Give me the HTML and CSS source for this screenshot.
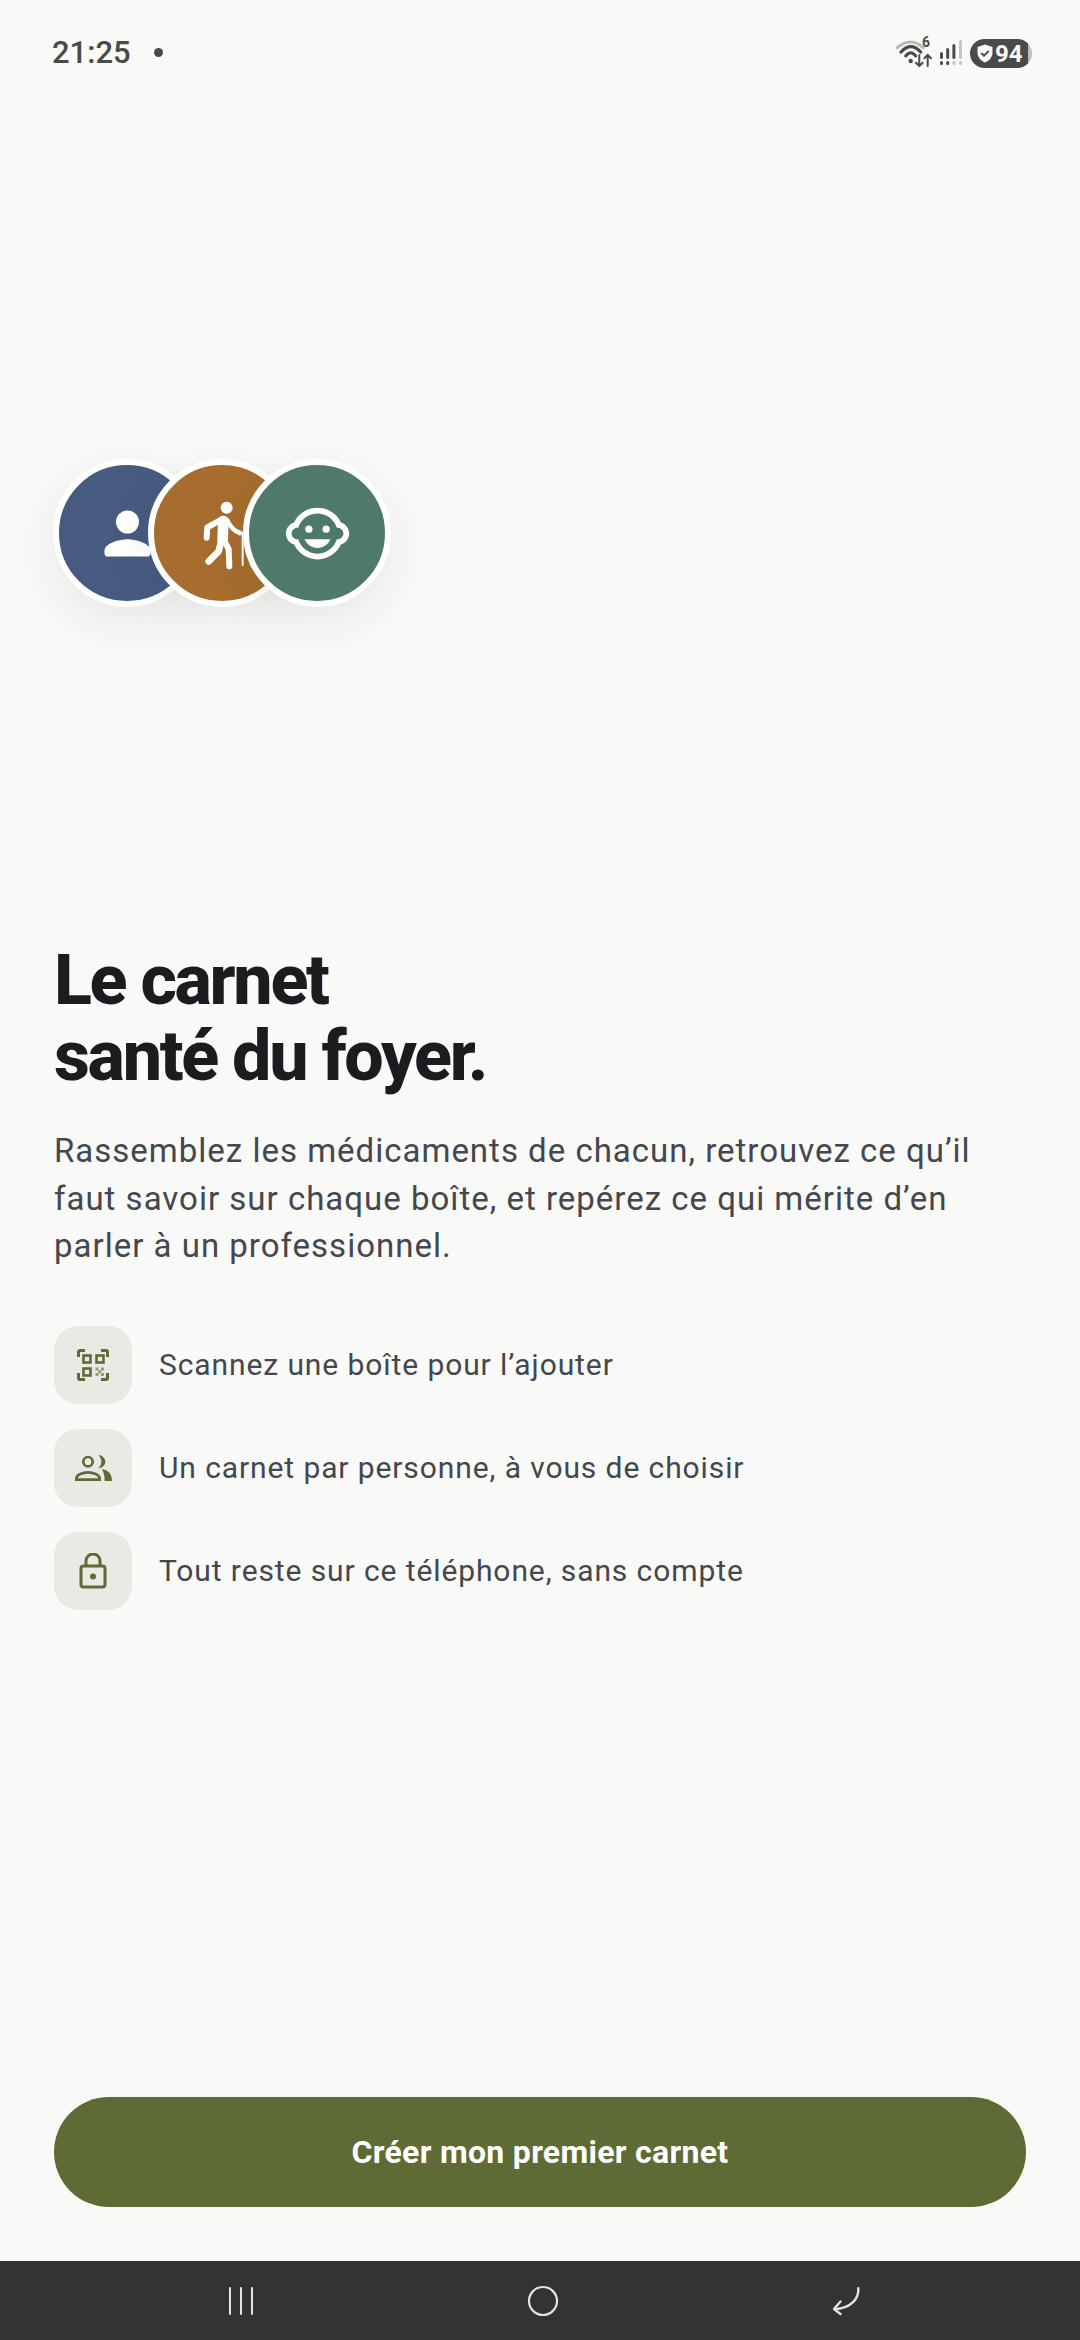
FILE: index.html
```html
<!DOCTYPE html>
<html lang="fr">
<head>
  <meta charset="UTF-8" />
  <meta name="viewport" content="width=device-width, initial-scale=1.0" />
  <title>Le carnet santé du foyer</title>
  <link rel="stylesheet" href="styles.css">
</head>
<body>
  <div class="status-bar">
    <div class="status-left">
      <span class="time">21:25</span>
      <span class="status-dot"></span>
    </div>
    <div class="status-right">
      <svg class="wifi" width="39" height="28" viewBox="0 0 39 28" fill="none" stroke="#4a4a4a" stroke-linecap="round">
        <path d="M2.300 8.700Q15.500 -2.700 28.300 8.700" stroke="#b8b8b6" stroke-width="3"/>
        <path d="M6 13Q15.700 2.400 25.700 13" stroke-width="3.200"/>
        <path d="M10.700 17Q15.700 10.400 20.700 17" stroke-width="3"/>
        <circle cx="15.700" cy="22" r="2.200" fill="#4a4a4a" stroke="none"/>
        <path d="M24.300 16v11M21 23.700l3.300 3.300 3.400-3.300" stroke-width="2"/>
        <path d="M32.700 16v11M29.300 19.300l3.400-3.300 3.300 3.300" stroke-width="2"/>
      </svg>
      <span class="net-badge">6</span>
      <svg class="signal" width="23" height="25" viewBox="0 0 23 25">
        <rect x="0" y="12" width="3" height="7" rx="1.500" fill="#4a4a4a"/>
        <rect x="6.200" y="8" width="3" height="11" rx="1.500" fill="#4a4a4a"/>
        <rect x="12.400" y="4" width="3" height="15" rx="1.500" fill="#4a4a4a"/>
        <rect x="19" y="0" width="3" height="19" rx="1.500" fill="#c4c4c2"/>
        <rect x="0" y="21" width="3" height="4" rx="1.500" fill="#4a4a4a"/>
        <rect x="6.200" y="21" width="3" height="4" rx="1.500" fill="#4a4a4a"/>
        <rect x="12.400" y="21" width="3" height="4" rx="1.500" fill="#c4c4c2"/>
        <rect x="19" y="21" width="3" height="4" rx="1.500" fill="#c4c4c2"/>
      </svg>
      <div class="battery">
        <svg width="16" height="19" viewBox="0 0 16 19">
          <path d="M8 .5l7.500 2.500v5.500c0 4.500-3 8-7.500 10-4.500-2-7.500-5.500-7.500-10V3z" fill="#f9f9f7"/>
          <path d="M4.300 9l2.700 2.700 4.700-4.700" fill="none" stroke="#4a4a4a" stroke-width="1.800"/>
        </svg>
        <span>94</span>
      </div>
    </div>
  </div>

  <main class="content">
    <div class="avatars">
      <div class="avatar avatar-adult">
        <svg width="69" height="69" viewBox="0 0 24 24" fill="#fff">
          <circle cx="12" cy="8" r="4"/>
          <path d="M4 18c0-2.660 5.330-4 8-4s8 1.340 8 4v1c0 .550-.450 1-1 1H5c-.550 0-1-.450-1-1z"/>
        </svg>
      </div>
      <div class="avatar avatar-senior">
        <svg width="80" height="80" viewBox="0 0 240 240" fill="none" stroke="#fff" stroke-linecap="round" stroke-linejoin="round">
          <circle cx="134" cy="44" r="18" fill="#fff" stroke="none"/>
          <path d="M124 84l-2 56" stroke-width="32"/>
          <path d="M118 80L76 103l-2 31" stroke-width="18"/>
          <path d="M136 82c8 18 20 32 38 38" stroke-width="14"/>
          <path d="M118 142l-8 33-30 30" stroke-width="20"/>
          <path d="M126 142l14 26 2 52" stroke-width="18"/>
          <path d="M182 120v96" stroke-width="6"/>
        </svg>
      </div>
      <div class="avatar avatar-child">
        <svg width="69" height="69" viewBox="0 0 24 24" fill="#fff">
          <circle cx="9" cy="10.500" r="1.250"/>
          <circle cx="15" cy="10.500" r="1.250"/>
          <path d="M22.940 12.660c.04-.21.06-.43.06-.66s-.02-.45-.06-.66c-.25-1.510-1.360-2.740-2.810-3.170-.53-1.120-1.280-2.100-2.190-2.910C16.360 3.850 14.280 3 12 3s-4.360.85-5.940 2.260c-.92.81-1.670 1.800-2.190 2.910-1.450.43-2.560 1.650-2.810 3.170-.04.21-.06.43-.06.66s.02.45.06.66c.25 1.510 1.360 2.740 2.810 3.170.52 1.110 1.270 2.090 2.170 2.890C7.620 20.140 9.710 21 12 21s4.380-.86 5.970-2.280c.9-.8 1.650-1.790 2.170-2.890 1.440-.43 2.550-1.650 2.800-3.170zM19 14c-.1 0-.19-.02-.29-.03-.2.67-.49 1.290-.86 1.860C16.600 17.740 14.450 19 12 19s-4.600-1.260-5.850-3.170c-.37-.57-.66-1.190-.86-1.860-.1.01-.19.03-.29.03-1.100 0-2-.9-2-2s.9-2 2-2c.1 0 .19.02.29.03.2-.67.49-1.290.86-1.860C7.400 6.260 9.550 5 12 5s4.600 1.260 5.850 3.170c.37.57.66 1.190.86 1.860.1-.01.19-.03.29-.03 1.100 0 2 .9 2 2s-.9 2-2 2zM7.500 14c.76 1.770 2.490 3 4.500 3s3.740-1.230 4.500-3h-9z"/>
        </svg>
      </div>
    </div>

    <h1>Le carnet<br>santé du foyer.</h1>
    <p class="intro">Rassemblez les médicaments de chacun, retrouvez ce qu’il faut savoir sur chaque boîte, et repérez ce qui mérite d’en parler à un professionnel.</p>

    <ul class="features">
      <li>
        <span class="tile">
          <svg width="32" height="32" viewBox="0 0 32 32" fill="none" stroke="#5e6b35" stroke-width="3">
            <path d="M1.500 8V3A1.500 1.500 0 0 1 3 1.500h5M24 1.500h5A1.500 1.500 0 0 1 30.500 3v5M30.500 24v5a1.500 1.500 0 0 1-1.500 1.500h-5M8 30.500H3A1.500 1.500 0 0 1 1.500 29v-5"/>
            <rect x="6.500" y="6.500" width="7" height="7" stroke-width="2.600"/>
            <rect x="19.500" y="6.500" width="7" height="7" stroke-width="2.600"/>
            <rect x="6.500" y="19.500" width="7" height="7" stroke-width="2.600"/>
            <path d="M18.500 18.500h3v3h-3zM24 18.500h3v3h-3zM21.200 21.200h3v3h-3zM18.500 24h3v3h-3zM24 24h3v3h-3z" fill="#5e6b35" stroke="none" opacity=".6"/>
          </svg>
        </span>
        <span>Scannez une boîte pour l’ajouter</span>
      </li>
      <li>
        <span class="tile">
          <svg width="37" height="26" viewBox="27 36 111 78" fill="none" stroke="#5e6b35" stroke-width="8">
            <circle cx="66" cy="56" r="14"/>
            <path d="M31 110v-3c0-12 20-19 35-19s35 7 35 19v3z"/>
            <path d="M97 36c12 2 21 10 21 20s-9 18-21 20c6-6 9-13 9-20s-3-14-9-20z" fill="#5e6b35" stroke="none"/>
            <path d="M108 78c17 3 30 12 30 36h-22c0-12-2-25-8-36z" fill="#5e6b35" stroke="none"/>
          </svg>
        </span>
        <span>Un carnet par personne, à vous de choisir</span>
      </li>
      <li>
        <span class="tile">
          <svg width="28" height="36" viewBox="0 0 28 36" fill="none" stroke="#5e6b35" stroke-width="3">
            <rect x="2" y="13" width="24" height="21" rx="2.500"/>
            <path d="M7 13V8a7 7 0 0 1 14 0v5"/>
            <circle cx="14" cy="23.500" r="3" fill="#5e6b35" stroke="none"/>
          </svg>
        </span>
        <span>Tout reste sur ce téléphone, sans compte</span>
      </li>
    </ul>

    <button class="primary" type="button">Créer mon premier carnet</button>
  </main>

  <nav class="nav-bar">
    <svg width="30" height="30" viewBox="0 0 30 30" stroke="#e4e4e4" stroke-width="2" stroke-linecap="round">
      <path d="M4 2v26M15 2v26M26 2v26"/>
    </svg>
    <svg width="32" height="32" viewBox="0 0 32 32" fill="none" stroke="#e4e4e4" stroke-width="2.200">
      <circle cx="16" cy="16" r="14"/>
    </svg>
    <svg width="32" height="30" viewBox="0 0 32 30" fill="none" stroke="#e4e4e4" stroke-width="2.400" stroke-linecap="round" stroke-linejoin="round">
      <path d="M28.300 2.300C29 12 22 22 5 23.300"/>
      <path d="M10.500 15.500L4 23l6.500 5"/>
    </svg>
  </nav>
</body>
</html>
```

FILE: styles.css
```css
* {
  margin: 0;
  padding: 0;
  box-sizing: border-box;
  font-family: 'Roboto', sans-serif;
}

body {
  width: 1080px;
  height: 2340px;
  display: flex;
  flex-direction: column;
  background: #f9f9f7;
  color: #44474d;
  overflow: hidden;
}

.status-bar {
  height: 104px;
  flex-shrink: 0;
  display: flex;
  justify-content: space-between;
  align-items: center;
  padding: 1px 48px 0 52px;
}

.status-left {
  display: flex;
  align-items: center;
  gap: 23px;
}

.time {
  font-size: 31px;
  font-weight: 500;
  color: #4a4a4a;
}

.status-dot {
  width: 9px;
  height: 9px;
  border-radius: 50%;
  background: #4a4a4a;
}

.status-right {
  display: flex;
  align-items: center;
  position: relative;
}

.net-badge {
  position: absolute;
  left: 27px;
  top: -3px;
  font-size: 14px;
  font-weight: 700;
  color: #4a4a4a;
}

.signal {
  margin-left: 6px;
  margin-right: 7px;
}

.battery {
  width: 62px;
  height: 29px;
  margin-top: 2px;
  display: flex;
  align-items: center;
  gap: 2px;
  padding-left: 7px;
  border-radius: 15px;
  background: linear-gradient(to right, #4a4a4a 94%, #bdbdbb 94%);
  color: #f9f9f7;
  font-size: 24px;
  font-weight: 700;
}

.content {
  flex: 1;
  display: flex;
  flex-direction: column;
  padding: 0 54px;
}

.avatars {
  display: flex;
  margin-top: 355px;
  margin-left: -1px;
}

.avatar {
  width: 148px;
  height: 148px;
  display: flex;
  align-items: center;
  justify-content: center;
  border: 6px solid #fff;
  border-radius: 50%;
  box-shadow: 0 16px 48px rgba(40, 45, 40, 0.08);
}

.avatar + .avatar {
  margin-left: -53px;
}

.avatar-adult {
  background: #475a80;
}

.avatar-senior {
  background: #a66d2e;
}

.avatar-child {
  background: #4f7a6a;
}

h1 {
  margin-top: 335px;
  font-size: 70px;
  font-weight: 800;
  line-height: 76px;
  letter-spacing: -2.300px;
  color: #1a1c20;
}

.intro {
  margin-top: 33px;
  font-size: 33px;
  line-height: 47.500px;
  letter-spacing: 1px;
}

.features {
  list-style: none;
  margin-top: 56px;
  display: flex;
  flex-direction: column;
  gap: 25px;
}

.features li {
  display: flex;
  align-items: center;
  gap: 27px;
  font-size: 30px;
  letter-spacing: 0.900px;
}

.tile {
  width: 78px;
  height: 78px;
  display: flex;
  align-items: center;
  justify-content: center;
  border-radius: 24px;
  background: #e9eae4;
}

.primary {
  margin-top: auto;
  margin-bottom: 54px;
  height: 110px;
  border: none;
  border-radius: 55px;
  background: #5e6b35;
  color: #fff;
  font-size: 32px;
  font-weight: 700;
  letter-spacing: 0.300px;
}

.nav-bar {
  height: 79px;
  flex-shrink: 0;
  display: flex;
  align-items: center;
  justify-content: space-between;
  padding: 0 218px 0 226px;
  background: #333;
}
```
